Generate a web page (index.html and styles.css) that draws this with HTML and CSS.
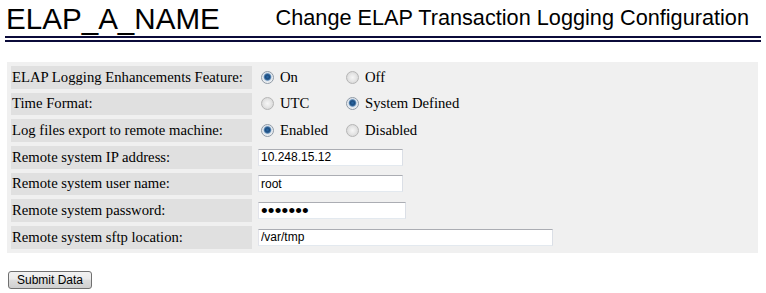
FILE: index.html
```html
<!DOCTYPE html>
<html lang="en">
<head>
<meta charset="utf-8">
<title>Change ELAP Transaction Logging Configuration</title>
<link rel="stylesheet" href="styles.css">
</head>
<body>
<header class="page-head">
  <h1 class="system-name">ELAP_A_NAME</h1>
  <h2 class="page-title">Change ELAP Transaction Logging Configuration</h2>
</header>
<form class="config-form" onsubmit="return false">
  <table class="config-table">
    <tr>
      <th>ELAP Logging Enhancements Feature:</th>
      <td>
        <div class="options">
          <label class="option"><input class="radio" type="radio" name="feature" checked><span>On</span></label>
          <label class="option"><input class="radio" type="radio" name="feature"><span>Off</span></label>
        </div>
      </td>
    </tr>
    <tr>
      <th>Time Format:</th>
      <td>
        <div class="options">
          <label class="option"><input class="radio" type="radio" name="timefmt"><span>UTC</span></label>
          <label class="option"><input class="radio" type="radio" name="timefmt" checked><span>System Defined</span></label>
        </div>
      </td>
    </tr>
    <tr>
      <th>Log files export to remote machine:</th>
      <td>
        <div class="options">
          <label class="option"><input class="radio" type="radio" name="export" checked><span>Enabled</span></label>
          <label class="option"><input class="radio" type="radio" name="export"><span>Disabled</span></label>
        </div>
      </td>
    </tr>
    <tr>
      <th>Remote system IP address:</th>
      <td><input class="field" type="text" value="10.248.15.12"></td>
    </tr>
    <tr>
      <th>Remote system user name:</th>
      <td><input class="field" type="text" value="root"></td>
    </tr>
    <tr>
      <th>Remote system password:</th>
      <td><input class="field field-password" type="password" value="1234567"></td>
    </tr>
    <tr>
      <th>Remote system sftp location:</th>
      <td><input class="field field-wide" type="text" value="/var/tmp"></td>
    </tr>
  </table>
  <button class="submit-btn" type="submit">Submit Data</button>
</form>
</body>
</html>
```

FILE: styles.css
```css
html, body {
  margin: 0;
  padding: 0;
  background: #ffffff;
  color: #000000;
}

body {
  font-family: "Liberation Serif", "Times New Roman", serif;
}

.page-head {
  display: flex;
  justify-content: space-between;
  align-items: flex-end;
  margin: 0 5px;
  padding: 0 12px 0 1px;
  border-bottom: 6px double #0b0b3a;
}

.system-name {
  margin: 0;
  padding-top: 1px;
  font-family: "Liberation Sans", Arial, sans-serif;
  font-weight: normal;
  font-size: 29.6px;
  line-height: 35px;
  color: #000000;
}

.page-title {
  margin: 0 0 6px 0;
  font-family: "Liberation Sans", Arial, sans-serif;
  font-weight: normal;
  font-size: 21.7px;
  line-height: 24px;
  color: #000000;
}

.config-form {
  margin: 20px 0 0 7px;
}

.config-table {
  width: 751px;
  background: #f0f0f0;
  border-spacing: 4px;
}

.config-table th {
  width: 240px;
  height: 22.67px;
  padding: 0 0 0 1px;
  background: #e0e0e0;
  text-align: left;
  font-weight: normal;
  font-size: 14.7px;
  white-space: nowrap;
}

.config-table td {
  padding: 0;
  height: 22.67px;
  font-size: 14.7px;
}

.options {
  display: flex;
  align-items: center;
}

.option {
  display: flex;
  align-items: center;
  width: 85px;
  flex: none;
  white-space: nowrap;
}

.radio {
  appearance: none;
  -webkit-appearance: none;
  box-sizing: border-box;
  width: 13px;
  height: 13px;
  margin: 0 6px 0 5px;
  border: 1px solid #b5b5b5;
  border-radius: 50%;
  background: radial-gradient(circle at 50% 50%, #f6f6f6 0, #e9e9e9 3px, #dcdcdc 5.5px);
  flex: none;
}

.radio:checked {
  border-color: #8f9aa6;
  background: radial-gradient(circle at 50% 45%, #2a6aa8 0, #1b4b7e 2.2px, #4f7fae 3.2px, #d9e2ec 4.2px, #eef0f2 5.5px);
}

.field {
  box-sizing: border-box;
  display: block;
  width: 145px;
  height: 17px;
  margin: 0 0 0 2px;
  padding: 0 2px;
  border: 1px solid;
  border-color: #abadb3 #dbdfe6 #e3e9ef #e2e3ea;
  background: #ffffff;
  font-family: "Liberation Sans", Arial, sans-serif;
  font-size: 12px;
  color: #000000;
  outline: none;
}

.field-password {
  width: 148px;
  font-size: 19px;
  letter-spacing: 0.2px;
}

.field-wide {
  width: 295px;
}

.submit-btn {
  display: block;
  box-sizing: border-box;
  width: 84px;
  height: 18px;
  margin: 18px 0 0 1px;
  padding: 0;
  border: 1px solid #707070;
  border-radius: 3px;
  background: linear-gradient(#f2f2f2 0, #ebebeb 45%, #dddddd 50%, #cfcfcf 100%);
  font-family: "Liberation Sans", Arial, sans-serif;
  font-size: 12px;
  line-height: 16px;
  color: #000000;
}
```
